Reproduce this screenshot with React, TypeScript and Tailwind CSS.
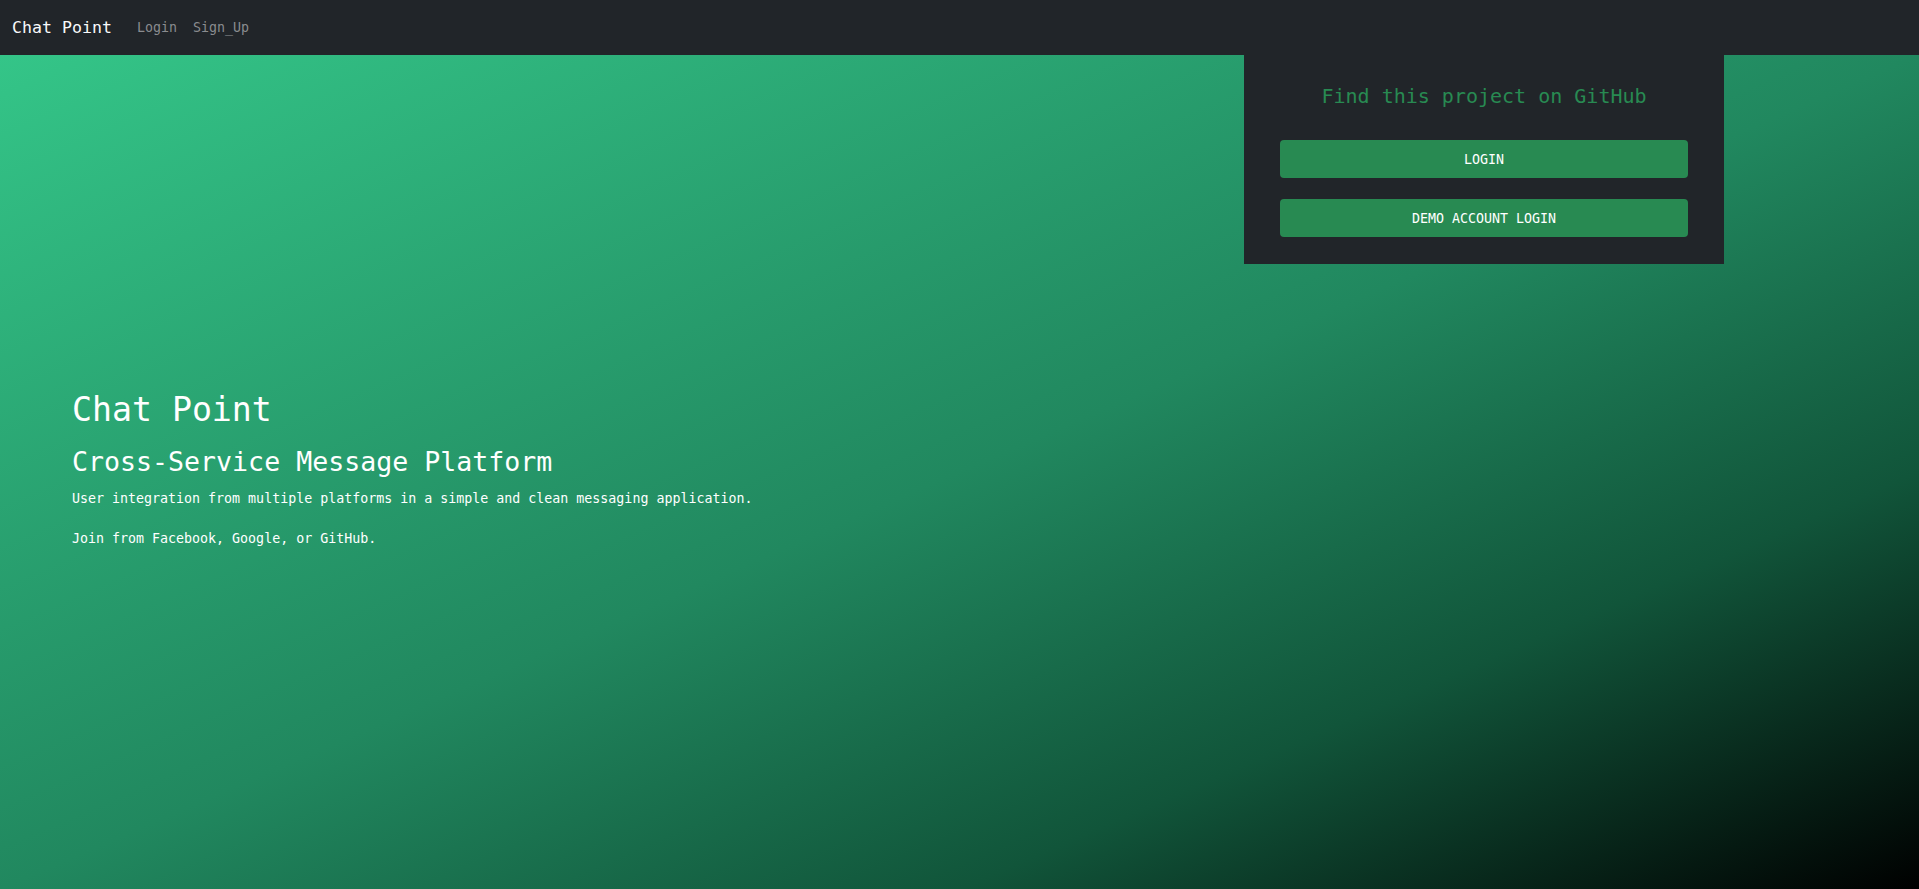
export default function App() {
  return (
    <div
      className="flex min-h-screen flex-col"
      style={{ fontFamily: '"DejaVu Sans Mono", "Liberation Mono", monospace' }}
    >
      {/* Navbar */}
      <nav className="flex h-[55px] items-center bg-[#212529] px-[12px]">
        <a href="#" className="mr-[17px] text-[16.6px] leading-[24px] text-[#f8f9fa]">
          Chat Point
        </a>
        <div className="flex items-center">
          <a href="#" className="px-[8px] text-[13.3px] leading-[20px] text-[#8a8c8f]">
            Login
          </a>
          <a href="#" className="px-[8px] text-[13.3px] leading-[20px] text-[#8a8c8f]">
            Sign_Up
          </a>
        </div>
      </nav>

      {/* Hero */}
      <main className="flex flex-1 items-start justify-between bg-[linear-gradient(to_bottom_right,#34c588_0%,#21885f_50%,#11553a_75%,#000_100%)]">
        <div className="ml-[72px] mt-[335px] text-white">
          <h1 className="text-[33.2px] leading-[40px] font-normal">Chat Point</h1>
          <h2 className="mt-[16px] text-[26.6px] leading-[32px] font-normal">
            Cross-Service Message Platform
          </h2>
          <p className="mt-[11px] text-[13.3px] leading-[20px]">
            User integration from multiple platforms in a simple and clean messaging application.
          </p>
          <p className="mt-[20px] text-[13.3px] leading-[20px]">
            Join from Facebook, Google, or GitHub.
          </p>
        </div>

        <div className="mr-[195px] flex w-[480px] flex-col bg-[#212529] px-[36px] pt-[27px] pb-[27px]">
          <h4 className="text-center text-[20px] leading-[28px] font-normal text-[#288a52]">
            Find this project on GitHub
          </h4>
          <button className="mt-[30px] h-[38px] rounded-[4px] bg-[#288a52] pt-[2px] text-[13.3px] leading-[20px] text-white">
            LOGIN
          </button>
          <button className="mt-[21px] h-[38px] rounded-[4px] bg-[#288a52] pt-[2px] text-[13.3px] leading-[20px] text-white">
            DEMO ACCOUNT LOGIN
          </button>
        </div>
      </main>
    </div>
  )
}
